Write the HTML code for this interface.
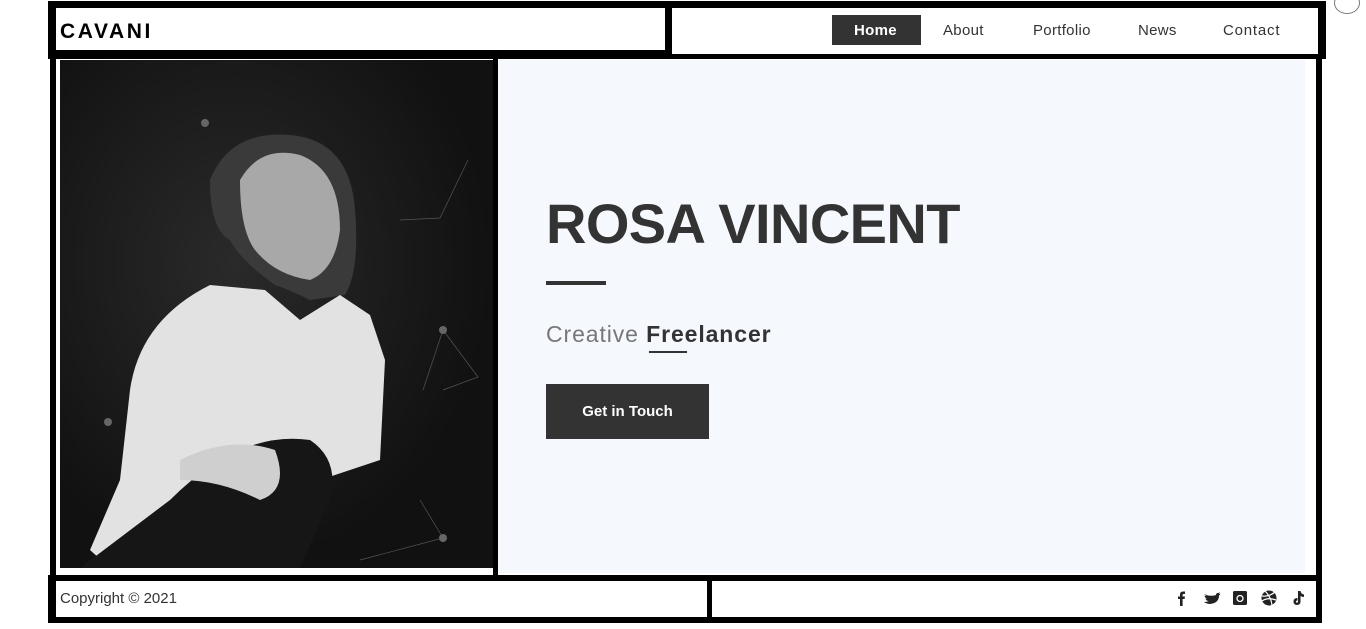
<!DOCTYPE html>
<html><head><meta charset="utf-8"><style>
*{margin:0;padding:0;box-sizing:border-box}
body{width:1366px;height:629px;background:#fff;position:relative;overflow:hidden;font-family:"Liberation Sans",sans-serif;color:#333}
.a{position:absolute}
.k{background:#000}
.w{background:#fff}
nav a{position:absolute;top:22px;font-size:15px;color:#333;text-decoration:none;letter-spacing:0.3px}
</style></head><body>
<!-- header -->
<div class="a k" style="left:48px;top:1px;width:1278px;height:58px"></div>
<div class="a w" style="left:56px;top:8px;width:609px;height:42px"></div>
<div class="a w" style="left:672px;top:8px;width:646px;height:46px"></div>
<div class="a" style="left:60px;top:20px;font-size:21px;font-weight:bold;letter-spacing:2.6px;color:#000">CAVANI</div>
<div class="a" style="left:832px;top:15px;width:89px;height:30px;background:#333"></div>
<nav>
<a style="left:854px;color:#fff;font-weight:bold">Home</a>
<a style="left:943px">About</a>
<a style="left:1033px">Portfolio</a>
<a style="left:1138px">News</a>
<a style="left:1223px;letter-spacing:0.8px">Contact</a>
</nav>
<div class="a" style="left:1334px;top:-8px;width:26px;height:22px;border:1.5px solid #777;border-radius:50%"></div>
<!-- main -->
<div class="a k" style="left:50px;top:59px;width:6px;height:516px"></div>
<div class="a k" style="left:1316px;top:59px;width:6px;height:516px"></div>
<div class="a k" style="left:493px;top:59px;width:5px;height:516px"></div>
<div class="a" style="left:498px;top:60px;width:807px;height:513px;background:#f5f9fd"></div>
<div class="a" style="left:60px;top:60px;width:433px;height:508px;background:radial-gradient(ellipse at 40% 40%,#2a2a2a,#111 70%);overflow:hidden">
<svg width="433" height="508" viewBox="0 0 433 508">
<g stroke="#555" stroke-width="0.7" fill="none"><path d="M340 160L380 158L408 100M383 330L418 317L383 270L363 330M360 440L383 478L300 500"/></g>
<g fill="#666"><circle cx="145" cy="63" r="4"/><circle cx="383" cy="270" r="4"/><circle cx="383" cy="478" r="4"/><circle cx="118" cy="478" r="4"/><circle cx="48" cy="362" r="4"/></g>
<path d="M150 120 Q170 70 230 75 Q290 80 295 150 Q300 210 285 235 L250 240 Q230 230 215 225 Q180 200 170 180 Q150 170 150 120Z" fill="#3a3a3a"/>
<path d="M180 120 Q200 85 240 95 Q280 110 280 170 Q275 210 250 220 Q215 215 195 190 Q180 170 180 120Z" fill="#a8a8a8"/>
<path d="M150 225 L205 230 L240 260 L280 235 L310 255 L325 300 L320 400 L260 420 L240 470 L200 450 L140 500 L50 508 L30 490 L60 420 L70 330 Q80 260 150 225Z" fill="#e2e2e2"/>
<path d="M110 440 Q180 370 250 380 Q280 400 270 440 L240 508 L20 508 Z" fill="#161616"/>
<path d="M120 400 Q170 375 215 390 Q230 430 200 440 Q160 420 120 420Z" fill="#cfcfcf"/>
</svg></div>
<div class="a" style="left:546px;top:191px;font-size:56px;font-weight:bold;color:#333;letter-spacing:-0.6px">ROSA VINCENT</div>
<div class="a" style="left:546px;top:281px;width:60px;height:4px;background:#333"></div>
<div class="a" style="left:546px;top:321px;font-size:23px;color:#777;letter-spacing:0.9px">Creative <span style="color:#333;font-weight:bold">Freelancer</span></div>
<div class="a" style="left:649px;top:351px;width:38px;height:2px;background:#333"></div>
<div class="a" style="left:546px;top:384px;width:163px;height:55px;background:#333;color:#fff;font-size:15px;font-weight:bold;text-align:center;line-height:55px">Get in Touch</div>
<!-- footer -->
<div class="a k" style="left:48px;top:575px;width:1274px;height:48px"></div>
<div class="a w" style="left:56px;top:581px;width:651px;height:36px"></div>
<div class="a w" style="left:712px;top:581px;width:604px;height:36px"></div>
<div class="a" style="left:60px;top:590px;font-size:15px;color:#333">Copyright © 2021</div>
<svg class="a" style="left:1174px;top:589px" width="132" height="18" viewBox="0 0 132 18" fill="#222">
<path d="M6 17V10H4V7.5H6V5.5Q6 2.5 9 2.5H11V5H9.5Q8.6 5 8.6 6V7.5H11L10.6 10H8.6V17Z"/>
<path d="M30 5Q36 8 42 6Q42 4 44 4Q45 4 46 3L45 5Q46 5 46.5 4.5Q46 6 45 6.5Q45 14 36 15Q33 15 30 13Q33 13 35 12Q32 12 31.5 9.5L33 9.5Q30.5 8.5 30.5 6.5Q31.5 7 32.5 7Q30 5 30 5Z"/>
<rect x="59" y="2" width="14" height="14" rx="1.5"/><circle cx="66" cy="9.5" r="3" fill="none" stroke="#fff" stroke-width="1.3"/>
<circle cx="95" cy="9" r="7.5"/><path d="M88 7Q95 8 101 3M91 2Q97 8 98 16M88 12Q93 8 102 11" stroke="#fff" stroke-width="1.2" fill="none"/>
<path d="M124 2H126.5Q127 5 130 5.5V8Q128 8 126.5 7V12.5Q126.5 16 123 16Q119.5 16 119.5 12.5Q119.5 9 123.5 9V11.5Q122 11.5 122 12.5Q122 13.8 123 13.8Q124 13.8 124 12.5Z"/>
</svg>
</body></html>
